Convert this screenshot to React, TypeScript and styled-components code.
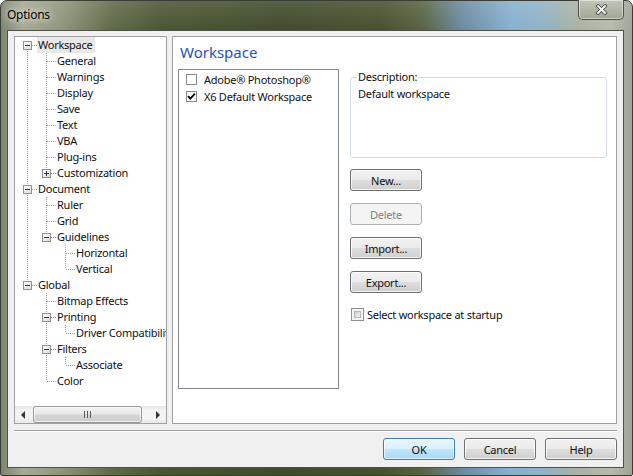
import React from "react";
import styled, { createGlobalStyle, css } from "styled-components";

const GlobalStyle = createGlobalStyle`
  html, body {
    margin: 0;
    padding: 0;
    background: #ffffff;
  }
  body {
    font-family: "Noto Sans", "Open Sans", sans-serif;
    font-size: 11px;
    letter-spacing: -0.25px;
    color: #111;
  }
  * {
    box-sizing: border-box;
  }
`;

const Window = styled.div`
  width: 633px;
  height: 476px;
  display: flex;
  flex-direction: column;
  padding: 0 8px 7px 6px;
  border: 1px solid #3a3d34;
  border-radius: 7px 7px 2px 2px;
  background:
    linear-gradient(180deg, rgba(255, 255, 255, 0.12) 0px, rgba(255, 255, 255, 0) 30px),
    linear-gradient(
      90deg,
      #7d8470 0px,
      #a5aa95 22px,
      #8f967d 60px,
      #5f6b48 110px,
      #495632 160px,
      #3f4b2b 280px,
      #45512f 380px,
      #56623f 420px,
      #6c8ba2 462px,
      #86b1cf 510px,
      #8fb2c8 540px,
      #a9b2a4 575px,
      #b7baad 610px,
      #9ea294 633px
    );
`;

const TitleBar = styled.div`
  height: 29px;
  display: flex;
  align-items: flex-start;
  flex: none;
`;

const Title = styled.div`
  font-size: 12px;
  line-height: 16px;
  margin: 6px 0 0 0;
  padding: 0;
  color: #000;
  text-shadow: 0 0 6px rgba(255, 255, 255, 0.9), 0 0 10px rgba(255, 255, 255, 0.7);
`;

const CloseButton = styled.div`
  margin: -1px 0 0 auto;
  width: 46px;
  height: 20px;
  display: flex;
  align-items: center;
  justify-content: center;
  border: 1px solid #4c5046;
  border-top: none;
  border-radius: 0 0 5px 5px;
  background: linear-gradient(180deg, #c3c7ba 0%, #aeb2a2 60%, #a2a796 100%);
  box-shadow: inset 0 0 0 1px rgba(255, 255, 255, 0.45);
`;

const Client = styled.div`
  flex: 1;
  display: flex;
  flex-direction: column;
  background: #f0f0f0;
  border: 1px solid #4d5146;
  padding: 5px 6px 6px 6px;
`;

const Panels = styled.div`
  display: flex;
  gap: 5px;
  height: 388px;
  flex: none;
`;

const TreePanel = styled.div`
  width: 153px;
  flex: none;
  display: flex;
  flex-direction: column;
  background: #fff;
  border: 1px solid #a0a0a0;
`;

const TreeBody = styled.div`
  flex: 1;
  overflow: hidden;
  padding-left: 3px;
`;

const Row = styled.div`
  display: flex;
  height: 16px;
  white-space: nowrap;
`;

const Label = styled.span<{ $selected?: boolean }>`
  line-height: 16px;
  padding: 0 2px 0 1px;
  background: ${(p) => (p.$selected ? "#e8e8e8" : "transparent")};
`;

const HScroll = styled.div`
  height: 17px;
  flex: none;
  display: flex;
  align-items: stretch;
  background: linear-gradient(180deg, #e6e6e6 0%, #f4f4f4 25%, #f4f4f4 75%, #e8e8e8 100%);
`;

const ArrowBox = styled.div`
  width: 17px;
  flex: none;
  display: flex;
  align-items: center;
  justify-content: center;
`;

const Track = styled.div`
  flex: 1;
  display: flex;
  align-items: stretch;
  padding: 0 0 0 1px;
`;

const Thumb = styled.div`
  width: 109px;
  display: flex;
  align-items: center;
  justify-content: center;
  border: 1px solid #979797;
  border-radius: 3px;
  background: linear-gradient(180deg, #f3f3f3 0%, #e8e8e8 45%, #d6d6d6 55%, #cdcdcd 100%);
  box-shadow: inset 0 0 0 1px rgba(255, 255, 255, 0.7);
`;

const RightPanel = styled.div`
  flex: 1;
  display: flex;
  flex-direction: column;
  background: #fff;
  border: 1px solid #a0a0a0;
`;

const Heading = styled.div`
  font-size: 15px;
  letter-spacing: 0;
  line-height: 20px;
  color: #1f55b5;
  margin: 5px 0 0 7px;
`;

const Body = styled.div`
  display: flex;
  margin-top: 7px;
  padding-left: 5px;
  gap: 11px;
`;

const ListBox = styled.div`
  width: 161px;
  height: 320px;
  border: 1px solid #828790;
  padding: 1px 0 0 7px;
`;

const ListItem = styled.div`
  display: flex;
  align-items: center;
  height: 17px;
  gap: 7px;
`;

const FlatBox = styled.span`
  width: 11px;
  height: 11px;
  flex: none;
  display: flex;
  align-items: center;
  justify-content: center;
  border: 1px solid #8a8a8a;
  background: #fff;
`;

const Side = styled.div`
  display: flex;
  flex-direction: column;
  align-items: flex-start;
`;

const Group = styled.fieldset`
  width: 257px;
  margin: 0;
  padding: 0 6px;
  border: 1px solid #d5dfe5;
  border-radius: 3px;
`;

const Legend = styled.legend`
  line-height: 16px;
  padding: 0 1px;
`;

const DescText = styled.div`
  height: 72px;
  padding: 1px 0 0 1px;
  line-height: 16px;
`;

const Button = styled.button<{ $default?: boolean }>`
  width: 72px;
  height: 22px;
  flex: none;
  padding: 0;
  font-family: inherit;
  font-size: 11px;
  letter-spacing: -0.25px;
  color: #111;
  border: 1px solid #707070;
  border-radius: 3px;
  background: linear-gradient(180deg, #f2f2f2 0%, #ebebeb 48%, #dddddd 52%, #cfcfcf 100%);
  box-shadow: inset 0 0 0 1px rgba(255, 255, 255, 0.75);
  ${(p) =>
    p.$default &&
    css`
      border-color: #3c7fb1;
      background: linear-gradient(180deg, #eaf6fd 0%, #d9f0fc 48%, #bee6fd 52%, #a7d9f5 100%);
      box-shadow: inset 0 0 0 1px rgba(255, 255, 255, 0.6);
    `}
  &:disabled {
    color: #838383;
    border-color: #adb2b5;
    background: #f4f4f4;
    box-shadow: none;
  }
`;

const SideButton = styled(Button)<{ $first?: boolean }>`
  margin-top: ${(p) => (p.$first ? 11 : 12)}px;
`;

const CheckRow = styled.label`
  display: flex;
  align-items: center;
  height: 16px;
  margin-top: 13px;
  margin-left: 1px;
  gap: 3px;
`;

const Win7Box = styled.span`
  width: 13px;
  height: 13px;
  flex: none;
  border: 1px solid #8e8f8f;
  background: #f4f4f4;
  padding: 2px;

  &::after {
    content: "";
    display: block;
    width: 100%;
    height: 100%;
    background: linear-gradient(135deg, #cbcfd5 0%, #e4e6e9 60%, #f0f0f0 100%);
    border: 1px solid #b3b6ba;
    box-sizing: border-box;
  }
`;

const Separator = styled.div`
  margin-top: 6px;
  height: 2px;
  border-top: 1px solid #a0a0a0;
  border-bottom: 1px solid #ffffff;
`;

const ButtonRow = styled.div`
  display: flex;
  justify-content: flex-end;
  gap: 9px;
  margin-top: 6px;
`;

type TreeNode = { label: string; kids?: TreeNode[]; open?: boolean; selected?: boolean };

const tree: TreeNode[] = [
  {
    label: "Workspace",
    open: true,
    selected: true,
    kids: [
      { label: "General" },
      { label: "Warnings" },
      { label: "Display" },
      { label: "Save" },
      { label: "Text" },
      { label: "VBA" },
      { label: "Plug-ins" },
      { label: "Customization", kids: [{ label: "Commands" }], open: false },
    ],
  },
  {
    label: "Document",
    open: true,
    kids: [
      { label: "Ruler" },
      { label: "Grid" },
      { label: "Guidelines", open: true, kids: [{ label: "Horizontal" }, { label: "Vertical" }] },
    ],
  },
  {
    label: "Global",
    open: true,
    kids: [
      { label: "Bitmap Effects" },
      { label: "Printing", open: true, kids: [{ label: "Driver Compatibility" }] },
      { label: "Filters", open: true, kids: [{ label: "Associate" }] },
      { label: "Color" },
    ],
  },
];

type FlatRow = {
  label: string;
  guides: boolean[];
  up: boolean;
  down: boolean;
  expander?: "plus" | "minus";
  selected?: boolean;
};

function flatten(nodes: TreeNode[], guides: boolean[], out: FlatRow[]) {
  nodes.forEach((n, i) => {
    const last = i === nodes.length - 1;
    out.push({
      label: n.label,
      guides,
      up: !(guides.length === 0 && i === 0),
      down: !last,
      expander: n.kids ? (n.open ? "minus" : "plus") : undefined,
      selected: n.selected,
    });
    if (n.kids && n.open) flatten(n.kids, [...guides, !last], out);
  });
}

const rows: FlatRow[] = [];
flatten(tree, [], rows);

const DOT = "#a0a0a0";

function GuideCell({ line }: { line: boolean }) {
  return (
    <svg width="19" height="16" style={{ flex: "none", display: "block" }}>
      {line && <line x1="9.5" y1="0" x2="9.5" y2="16" stroke={DOT} strokeDasharray="1 1" />}
    </svg>
  );
}

function ConnectorCell({ row }: { row: FlatRow }) {
  return (
    <svg width="19" height="16" style={{ flex: "none", display: "block" }}>
      {row.up && <line x1="9.5" y1="0" x2="9.5" y2="8" stroke={DOT} strokeDasharray="1 1" />}
      {row.down && <line x1="9.5" y1="8" x2="9.5" y2="16" stroke={DOT} strokeDasharray="1 1" />}
      <line x1="10" y1="8.5" x2="19" y2="8.5" stroke={DOT} strokeDasharray="1 1" />
      {row.expander && (
        <g>
          <defs>
            <linearGradient id="exp" x1="0" y1="0" x2="1" y2="1">
              <stop offset="0" stopColor="#ffffff" />
              <stop offset="1" stopColor="#d8d8d8" />
            </linearGradient>
          </defs>
          <rect x="5.5" y="4.5" width="8" height="8" fill="url(#exp)" stroke="#919191" />
          <line x1="7" y1="8.5" x2="12" y2="8.5" stroke="#2b3b52" />
          {row.expander === "plus" && <line x1="9.5" y1="6" x2="9.5" y2="11" stroke="#2b3b52" />}
        </g>
      )}
    </svg>
  );
}

function TreeRow({ row }: { row: FlatRow }) {
  return (
    <Row>
      {row.guides.map((g, i) => (
        <GuideCell key={i} line={g} />
      ))}
      <ConnectorCell row={row} />
      <Label $selected={row.selected}>{row.label}</Label>
    </Row>
  );
}

function Tick() {
  return (
    <svg width="9" height="9" viewBox="0 0 9 9">
      <path d="M1 4.2 L3.3 6.6 L8 1.6" fill="none" stroke="#000" strokeWidth="1.8" />
    </svg>
  );
}

function Arrow({ dir }: { dir: "left" | "right" }) {
  return (
    <svg width="5" height="8" viewBox="0 0 5 8">
      {dir === "left" ? <path d="M4 0 L0 4 L4 8 Z" fill="#333" /> : <path d="M1 0 L5 4 L1 8 Z" fill="#333" />}
    </svg>
  );
}

function Grip() {
  return (
    <svg width="7" height="7" viewBox="0 0 7 7">
      {[0.5, 3.5, 6.5].map((x) => (
        <line key={x} x1={x} y1="0" x2={x} y2="7" stroke="#5a5a5a" />
      ))}
    </svg>
  );
}

function CloseGlyph() {
  return (
    <svg width="13" height="11" viewBox="0 0 13 11">
      <path d="M3 2 L10 9 M10 2 L3 9" stroke="#4a4d46" strokeWidth="3.6" strokeLinecap="square" />
      <path d="M3 2 L10 9 M10 2 L3 9" stroke="#ffffff" strokeWidth="1.8" strokeLinecap="square" />
    </svg>
  );
}

export default function App() {
  return (
    <>
      <GlobalStyle />
      <Window>
        <TitleBar>
          <Title>Options</Title>
          <CloseButton>
            <CloseGlyph />
          </CloseButton>
        </TitleBar>
        <Client>
          <Panels>
            <TreePanel>
              <TreeBody>
                {rows.map((r) => (
                  <TreeRow key={r.label} row={r} />
                ))}
              </TreeBody>
              <HScroll>
                <ArrowBox>
                  <Arrow dir="left" />
                </ArrowBox>
                <Track>
                  <Thumb>
                    <Grip />
                  </Thumb>
                </Track>
                <ArrowBox>
                  <Arrow dir="right" />
                </ArrowBox>
              </HScroll>
            </TreePanel>
            <RightPanel>
              <Heading>Workspace</Heading>
              <Body>
                <ListBox>
                  <ListItem>
                    <FlatBox />
                    Adobe® Photoshop®
                  </ListItem>
                  <ListItem>
                    <FlatBox>
                      <Tick />
                    </FlatBox>
                    X6 Default Workspace
                  </ListItem>
                </ListBox>
                <Side>
                  <Group>
                    <Legend>Description:</Legend>
                    <DescText>Default workspace</DescText>
                  </Group>
                  <SideButton $first>New...</SideButton>
                  <SideButton disabled>Delete</SideButton>
                  <SideButton>Import...</SideButton>
                  <SideButton>Export...</SideButton>
                  <CheckRow>
                    <Win7Box />
                    Select workspace at startup
                  </CheckRow>
                </Side>
              </Body>
            </RightPanel>
          </Panels>
          <Separator />
          <ButtonRow>
            <Button $default>OK</Button>
            <Button>Cancel</Button>
            <Button>Help</Button>
          </ButtonRow>
        </Client>
      </Window>
    </>
  );
}
